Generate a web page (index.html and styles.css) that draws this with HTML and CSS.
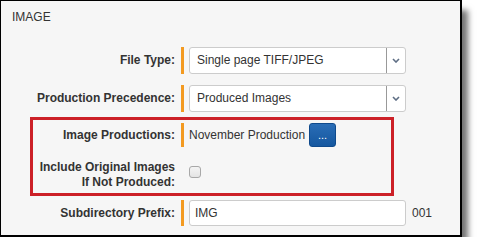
FILE: index.html
```html
<!DOCTYPE html>
<html>
<head>
<meta charset="utf-8">
<link rel="stylesheet" href="styles.css">
</head>
<body>
<div class="panel">
  <div class="title">IMAGE</div>
  <div class="row row-select">
    <div class="label">File Type:</div>
    <span class="req"></span>
    <div class="select">
      <span class="select-text">Single page TIFF/JPEG</span>
      <span class="select-arrow"><svg width="8" height="5" viewBox="0 0 8 5"><path d="M1 1 L4 4 L7 1" fill="none" stroke="#5e6e84" stroke-width="1.6"/></svg></span>
    </div>
  </div>
  <div class="row row-select row-gap">
    <div class="label">Production Precedence:</div>
    <span class="req"></span>
    <div class="select">
      <span class="select-text">Produced Images</span>
      <span class="select-arrow"><svg width="8" height="5" viewBox="0 0 8 5"><path d="M1 1 L4 4 L7 1" fill="none" stroke="#5e6e84" stroke-width="1.6"/></svg></span>
    </div>
  </div>
  <div class="annot">
    <div class="row row-short">
      <div class="label">Image Productions:</div>
      <span class="req"></span>
      <span class="value">November Production</span>
      <button class="btn">...</button>
    </div>
    <div class="row row-check">
      <div class="label">Include Original Images<br>If Not Produced:</div>
      <input type="checkbox" class="check">
    </div>
  </div>
  <div class="row row-input">
    <div class="label">Subdirectory Prefix:</div>
    <span class="req"></span>
    <div class="input">IMG</div>
    <span class="suffix">001</span>
  </div>
</div>
</body>
</html>
```
FILE: styles.css
```css
html, body {
  margin: 0;
  padding: 0;
  background: #ffffff;
}
body {
  font-family: "Liberation Sans", Arial, sans-serif;
  font-size: 12px;
  color: #333333;
}
.panel {
  box-sizing: border-box;
  width: 462px;
  height: 237px;
  background: #f6f6f6;
  border-style: solid;
  border-color: #000000;
  border-width: 1px 2px 2px 1px;
  padding-top: 9px;
  box-shadow: 8px 8px 6px -2px rgba(0, 0, 0, 0.55);
}
.title {
  padding-left: 11px;
  line-height: 15px;
  color: #333333;
}
.row {
  display: flex;
  align-items: center;
}
.label {
  width: 174px;
  flex: none;
  text-align: right;
  font-weight: bold;
  line-height: 15px;
  color: #333333;
}
.req {
  align-self: stretch;
  width: 3px;
  margin-left: 6px;
  background: #f39a21;
  flex: none;
}
.row-select {
  height: 27px;
  margin-top: 22px;
}
.row-gap {
  margin-top: 11px;
}
.select {
  box-sizing: border-box;
  margin-left: 5px;
  width: 217px;
  height: 27px;
  display: flex;
  background: #ffffff;
  border: 1px solid #cccccc;
  border-radius: 3px;
}
.select-text {
  flex: 1;
  padding-left: 7px;
  line-height: 25px;
}
.select-arrow {
  width: 18px;
  border-left: 1px solid #999999;
  display: flex;
  align-items: center;
  justify-content: center;
}
.select-arrow svg {
  display: block;
}
.annot {
  box-sizing: border-box;
  margin-top: 5px;
  margin-left: 29px;
  width: 364px;
  border: 3px solid #cc2027;
  padding: 3px 0;
}
.annot .row {
  margin-left: -32px;
}
.row-short {
  height: 24px;
}
.value {
  margin-left: 5px;
  line-height: 15px;
}
.btn {
  box-sizing: border-box;
  margin: 0 0 0 4px;
  width: 27px;
  height: 24px;
  padding: 0 0 4px;
  border: 1px solid #0f4a8c;
  border-radius: 3px;
  background: linear-gradient(#2a6db6, #15579f);
  color: #ffffff;
  font-family: "Liberation Sans", Arial, sans-serif;
  font-size: 11px;
  line-height: 14px;
  display: flex;
  align-items: flex-end;
  justify-content: center;
}
.annot .row-check {
  margin-top: 13px;
  align-items: flex-start;
}
.check {
  appearance: none;
  -webkit-appearance: none;
  box-sizing: border-box;
  width: 12px;
  height: 12px;
  margin: 6px 0 0 14px;
  border: 1px solid #a8a8a8;
  border-radius: 3px;
  background: linear-gradient(#f4f4f4, #e4e4e4);
}
.row-input {
  height: 26px;
  margin-top: 4px;
}
.input {
  box-sizing: border-box;
  margin-left: 5px;
  width: 217px;
  height: 26px;
  padding-left: 5px;
  line-height: 24px;
  background: #ffffff;
  border: 1px solid #cccccc;
  border-radius: 3px;
}
.suffix {
  margin-left: 6px;
  line-height: 15px;
}
```
